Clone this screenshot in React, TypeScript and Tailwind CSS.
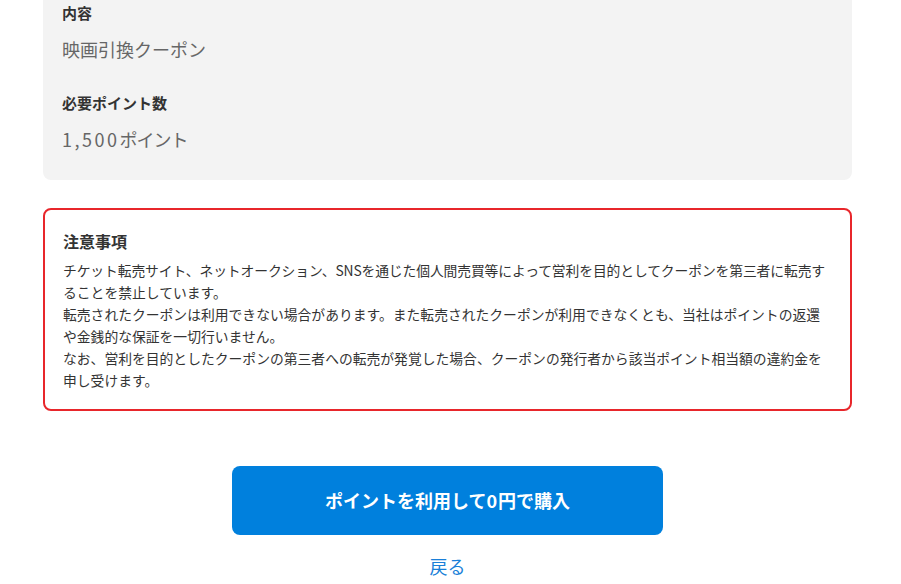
import React from "react";

export default function App() {
  return (
    <div
      className="w-[901px] h-[584px] overflow-hidden bg-white"
      style={{ fontFamily: '"Noto Sans CJK JP", "Noto Sans", sans-serif' }}
    >
      <div className="ml-[43px] w-[809px] -mt-[18px]">
        <div className="bg-[#f3f3f3] rounded-[8px] pt-[20px] pb-[28px] px-[19px]">
          <div className="text-[15px] leading-[22px] font-bold text-[#333]">内容</div>
          <div className="mt-[12px] text-[18px] leading-[26px] text-[#666]">映画引換クーポン</div>
          <div className="mt-[30px] text-[15px] leading-[22px] font-bold text-[#333]">必要ポイント数</div>
          <div className="mt-[12px] text-[18px] leading-[26px] text-[#666]">
            <span className="tracking-[2.5px]">1,500</span>
            <span className="tracking-[-1px]">ポイント</span>
          </div>
        </div>

        <div className="mt-[28px] border-2 border-[#e8262b] rounded-[8px] pt-[19px] pb-[18px] px-[18px]">
          <div className="text-[16px] leading-[24px] font-bold text-[#333]">注意事項</div>
          <div className="mt-[6px] text-[13.8px] leading-[22px] text-[#333] whitespace-nowrap">
            <span className="tracking-[-0.12px]">
              チケット転売サイト、ネットオークション、SNSを通じた個人間売買等によって営利を目的としてクーポンを第三者に転売す
            </span>
            <br />
            ることを禁止しています。
            <br />
            転売されたクーポンは利用できない場合があります。また転売されたクーポンが利用できなくとも、当社はポイントの返還
            <br />
            や金銭的な保証を一切行いません。
            <br />
            なお、営利を目的としたクーポンの第三者への転売が発覚した場合、クーポンの発行者から該当ポイント相当額の違約金を
            <br />
            申し受けます。
          </div>
        </div>

        <div className="mt-[55px] flex justify-center">
          <button className="w-[431px] h-[69px] rounded-[8px] bg-[#0080dd] text-white text-[18px] font-bold flex items-center justify-center">
            ポイントを利用して<span className="tracking-[1px]">0</span>円で購入
          </button>
        </div>
        <div className="mt-[18px] flex justify-center">
          <a className="text-[18px] leading-[26px] text-[#1a7fd8]">戻る</a>
        </div>
      </div>
    </div>
  );
}
